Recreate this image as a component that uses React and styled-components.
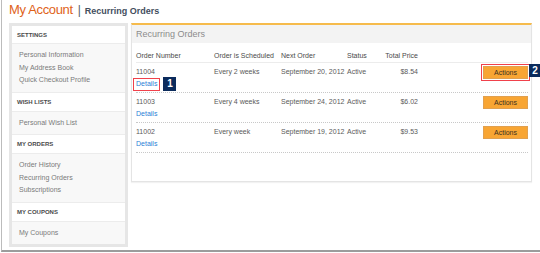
import React from "react";
import styled, { createGlobalStyle } from "styled-components";

const Global = createGlobalStyle`
  html, body { margin: 0; padding: 0; background: #fff; }
  body { font-family: "Liberation Sans", Arial, sans-serif; }
  * { box-sizing: border-box; }
`;

const Page = styled.div`
  width: 539px;
  height: 252px;
  margin-left: 1px;
  border-left: 1px solid #bcbcbc;
  border-bottom: 2px solid #9c9c9c;
  padding-left: 7px;
  overflow: hidden;
`;

const TitleBar = styled.div`
  height: 22px;
  display: flex;
  align-items: baseline;
  padding-top: 2px;
  white-space: nowrap;
`;

const Title = styled.span`
  font-size: 13px;
  letter-spacing: -0.35px;
  color: #e0621a;
`;

const Sep = styled.span`
  font-size: 12px;
  color: #56606e;
  margin: 0 4px 0 5px;
`;

const SubTitle = styled.span`
  font-size: 9px;
  font-weight: bold;
  color: #434e5e;
`;

const Content = styled.div`
  display: flex;
  align-items: flex-start;
  gap: 3px;
  margin-top: 1px;
`;

const Sidebar = styled.div`
  width: 119px;
  border: 3px solid #e6e6e6;
  background: #fff;
`;

const SideHead = styled.div`
  height: ${(p) => (p.$first ? 18 : 20)}px;
  display: flex;
  align-items: center;
  padding-left: 5px;
  font-size: 6px;
  font-weight: bold;
  text-transform: uppercase;
  color: #4a4a4a;
  background: #fff;
  border-top: ${(p) => (p.$first ? "none" : "1px solid #ececec")};
  border-bottom: 1px solid #ececec;
`;

const SideLinks = styled.div`
  background: #f8f8f8;
  padding: 5px 0 5px 7px;
  display: flex;
  flex-direction: column;
`;

const SideLink = styled.span`
  font-size: 7px;
  line-height: 12.5px;
  color: #7a7a7a;
`;

const Panel = styled.div`
  width: 401px;
  border: 1px solid #e4e4e4;
  border-top: 2px solid #f6bb4c;
  box-shadow: 0 1px 1px rgba(0, 0, 0, 0.05);
  background: #fff;
  padding-bottom: 28px;
`;

const PanelHead = styled.div`
  height: 18px;
  background: #f3f3f3;
  display: flex;
  align-items: center;
  padding-left: 4px;
  font-size: 9px;
  color: #8c8c8c;
`;

const Table = styled.div`
  padding: 0 3px 0 4px;
`;

const Row = styled.div`
  display: grid;
  grid-template-columns: 78px 67px 66px 31px 40px 1fr;
  align-items: start;
  padding: ${(p) => (p.$head ? "7px 0 0" : "3px 0")};
  height: ${(p) => (p.$head ? 20 : 30)}px;
  border-bottom: 1px ${(p) => (p.$head ? "solid #ececec" : "dotted #c8c8c8")};
  font-size: 7px;
  line-height: 12px;
  color: ${(p) => (p.$head ? "#4a4a4a" : "#5a5a5a")};
`;

const Cell = styled.div`
  white-space: nowrap;
  text-align: ${(p) => (p.$right ? "right" : "left")};
  display: flex;
  flex-direction: column;
  align-items: ${(p) => (p.$right ? "flex-end" : "flex-start")};
`;

const DetailsLink = styled.a`
  position: relative;
  color: #2b7fd6;
  text-decoration: none;
  cursor: pointer;
`;

const Highlight = styled.span`
  position: absolute;
  top: ${(p) => p.$t}px;
  bottom: ${(p) => p.$b}px;
  left: ${(p) => p.$l}px;
  right: ${(p) => p.$r}px;
  border: 1px solid #f0414b;
  pointer-events: none;
`;

const Badge = styled.span`
  position: absolute;
  left: calc(100% + ${(p) => p.$gap}px);
  top: ${(p) => p.$top}px;
  width: ${(p) => p.$w}px;
  height: ${(p) => p.$h}px;
  background: #0b2b5c;
  color: #fff;
  font-size: 10px;
  font-weight: bold;
  display: flex;
  align-items: center;
  justify-content: center;
  line-height: 1;
`;

const ActionButton = styled.button`
  position: relative;
  width: 45px;
  height: 13px;
  padding: 0;
  background: #f8a533;
  border: 1px solid #e1a04f;
  color: #3a3020;
  font-family: inherit;
  font-size: 7px;
  line-height: 11px;
  cursor: pointer;
`;

const sections = [
  { title: "Settings", links: ["Personal Information", "My Address Book", "Quick Checkout Profile"] },
  { title: "Wish Lists", links: ["Personal Wish List"] },
  { title: "My Orders", links: ["Order History", "Recurring Orders", "Subscriptions"] },
  { title: "My Coupons", links: ["My Coupons"] },
];

const orders = [
  { id: "11004", sched: "Every 2 weeks", next: "September 20, 2012", status: "Active", price: "$8.54" },
  { id: "11003", sched: "Every 4 weeks", next: "September 24, 2012", status: "Active", price: "$6.02" },
  { id: "11002", sched: "Every week", next: "September 19, 2012", status: "Active", price: "$9.53" },
];

export default function App() {
  return (
    <>
      <Global />
      <Page>
        <TitleBar>
          <Title>My Account</Title>
          <Sep>|</Sep>
          <SubTitle>Recurring Orders</SubTitle>
        </TitleBar>
        <Content>
          <Sidebar>
            {sections.map((s, i) => (
              <div key={s.title}>
                <SideHead $first={i === 0}>{s.title}</SideHead>
                <SideLinks>
                  {s.links.map((l) => (
                    <SideLink key={l}>{l}</SideLink>
                  ))}
                </SideLinks>
              </div>
            ))}
          </Sidebar>
          <Panel>
            <PanelHead>Recurring Orders</PanelHead>
            <Table>
              <Row $head>
                <Cell>Order Number</Cell>
                <Cell>Order is Scheduled</Cell>
                <Cell>Next Order</Cell>
                <Cell>Status</Cell>
                <Cell $right>Total Price</Cell>
                <Cell />
              </Row>
              {orders.map((o, i) => (
                <Row key={o.id}>
                  <Cell>
                    <span>{o.id}</span>
                    <DetailsLink>
                      Details
                      {i === 0 && (
                        <>
                          <Highlight $t={0} $b={-1} $l={-3} $r={-3} />
                          <Badge $gap={6} $top={-1} $w={13} $h={14}>1</Badge>
                        </>
                      )}
                    </DetailsLink>
                  </Cell>
                  <Cell>{o.sched}</Cell>
                  <Cell>{o.next}</Cell>
                  <Cell>{o.status}</Cell>
                  <Cell $right>{o.price}</Cell>
                  <Cell $right>
                    <ActionButton>
                      Actions
                      {i === 0 && (
                        <>
                          <Highlight $t={-3} $b={-3} $l={-3} $r={-3} />
                          <Badge $gap={2} $top={-3} $w={12} $h={13}>2</Badge>
                        </>
                      )}
                    </ActionButton>
                  </Cell>
                </Row>
              ))}
            </Table>
          </Panel>
        </Content>
      </Page>
    </>
  );
}
